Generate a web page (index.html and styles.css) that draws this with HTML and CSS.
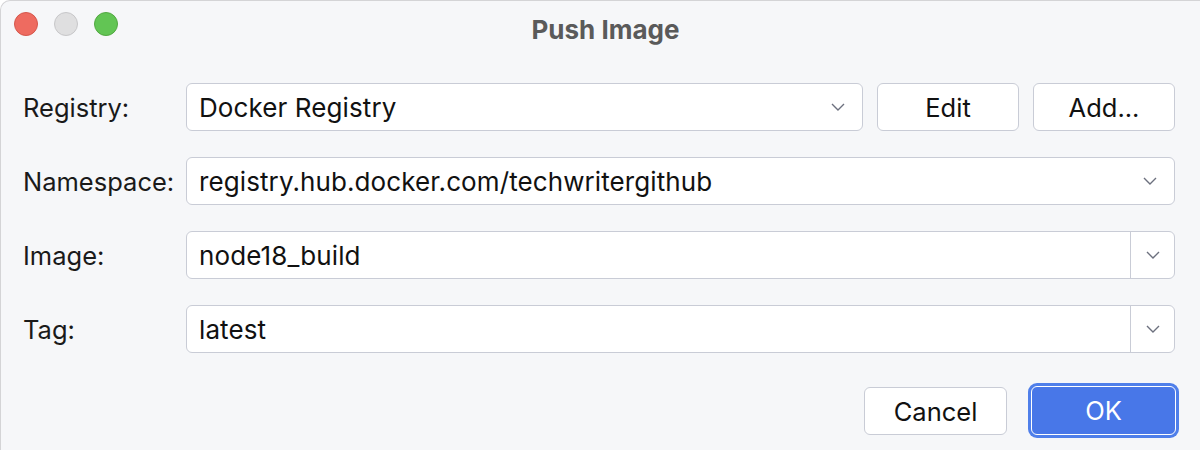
FILE: index.html
```html
<!DOCTYPE html>
<html>
<head>
<meta charset="utf-8">
<link rel="stylesheet" href="styles.css">
</head>
<body>
<div class="window">
  <div class="titlebar">
    <div class="lights">
      <span class="light red"></span>
      <span class="light gray"></span>
      <span class="light green"></span>
    </div>
    <div class="title">Push Image</div>
  </div>
  <div class="form">
    <label class="lbl">Registry:</label>
    <div class="row-flex">
      <div class="combo grow">
        <span class="val">Docker Registry</span>
        <svg class="chev" width="14" height="8" viewBox="0 0 14 8"><path d="M1 1 L7 7 L13 1" fill="none" stroke="#6c707e" stroke-width="1.4"/></svg>
      </div>
      <button class="btn small">Edit</button>
      <button class="btn small">Add...</button>
    </div>

    <label class="lbl">Namespace:</label>
    <div class="combo">
      <span class="val">registry.hub.docker.com/techwritergithub</span>
      <svg class="chev" width="14" height="8" viewBox="0 0 14 8"><path d="M1 1 L7 7 L13 1" fill="none" stroke="#6c707e" stroke-width="1.4"/></svg>
    </div>

    <label class="lbl">Image:</label>
    <div class="combo edit">
      <span class="val">node18_build</span>
      <span class="arrowbox"><svg width="14" height="8" viewBox="0 0 14 8"><path d="M1 1 L7 7 L13 1" fill="none" stroke="#6c707e" stroke-width="1.4"/></svg></span>
    </div>

    <label class="lbl">Tag:</label>
    <div class="combo edit">
      <span class="val">latest</span>
      <span class="arrowbox"><svg width="14" height="8" viewBox="0 0 14 8"><path d="M1 1 L7 7 L13 1" fill="none" stroke="#6c707e" stroke-width="1.4"/></svg></span>
    </div>
  </div>
  <div class="footer">
    <button class="btn cancel">Cancel</button>
    <button class="btn ok">OK</button>
  </div>
</div>
</body>
</html>
```
FILE: styles.css
```css
html, body {
  margin: 0;
  padding: 0;
  background: #ffffff;
}
body {
  width: 1200px;
  height: 450px;
  overflow: hidden;
  font-family: Inter, "Noto Sans", sans-serif;
}
.window {
  width: 1200px;
  height: 450px;
  background: #f6f7f9;
  border-top-left-radius: 10px;
  box-sizing: border-box;
  border-top: 1px solid #d4d4d6;
  border-left: 1px solid #d4d4d6;
  position: relative;
}
.titlebar {
  height: 59px;
  display: flex;
  align-items: center;
  justify-content: center;
  position: relative;
}
.lights {
  position: absolute;
  left: 13px;
  top: 11px;
  display: flex;
  gap: 16px;
}
.light {
  width: 24px;
  height: 24px;
  border-radius: 50%;
  box-sizing: border-box;
  display: block;
}
.red { background: #ee6b60; border: 1px solid #d5574c; }
.gray { background: #dfdfe0; border: 1px solid #c7c7c9; }
.green { background: #62c554; border: 1px solid #52a842; }
.title {
  font-weight: 700;
  font-size: 26px;
  color: #5a5a5a;
  margin-left: 10px;
  margin-top: -2px;
}
.form {
  display: grid;
  grid-template-columns: 163px 1fr;
  row-gap: 26px;
  padding: 23px 25px 0 22px;
  align-items: center;
}
.lbl {
  font-size: 25.5px;
  color: #1a1a1a;
}
.row-flex {
  display: flex;
  gap: 14px;
  align-items: center;
}
.combo {
  height: 48px;
  box-sizing: border-box;
  border: 1.5px solid #c9ccd6;
  border-radius: 6px;
  background: #ffffff;
  display: flex;
  align-items: center;
  padding-left: 12px;
  padding-right: 17px;
  font-size: 26px;
  letter-spacing: 0.1px;
  color: #111;
}
.combo.grow { flex: 1; }
.combo .val { flex: 1; white-space: nowrap; }
.combo.edit { padding-right: 0; }
.arrowbox {
  width: 43px;
  height: 100%;
  border-left: 1.5px solid #c9ccd6;
  display: flex;
  align-items: center;
  justify-content: center;
}
.btn {
  font-family: Inter, "Noto Sans", sans-serif;
  font-size: 25.5px;
  color: #111;
  background: #ffffff;
  border: 1.5px solid #c9ccd6;
  border-radius: 6px;
  box-sizing: border-box;
  height: 48px;
  padding: 0;
}
.btn.small { width: 142px; }
.footer {
  display: flex;
  justify-content: flex-end;
  gap: 24px;
  padding: 34px 24px 0 0;
}
.cancel { width: 143px; }
.ok {
  width: 145px;
  height: 49px;
  background: #4877e8;
  color: #ffffff;
  border: 1.5px solid #ffffff;
  box-shadow: 0 0 0 3px #4f7fea;
  border-radius: 6px;
  margin-top: -1px;
}
```
